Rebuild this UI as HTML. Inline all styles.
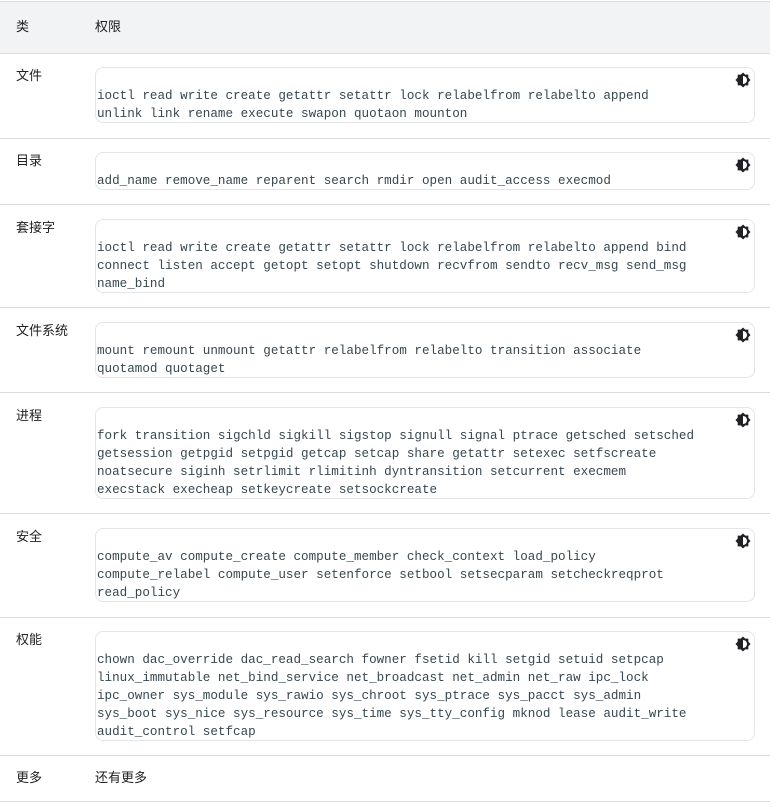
<!DOCTYPE html>
<html><head><meta charset="utf-8"><style>
body{margin:0;background:#fff;width:777px;height:807px;position:relative;overflow:hidden;font-family:"Liberation Sans","Noto Sans CJK SC",sans-serif;font-size:13px;color:#202124}
.hd{position:absolute;left:0;top:1px;width:770px;height:51px;background:#f1f3f4;border-top:1px solid #dadce0;border-bottom:1px solid #dadce0}
.line{position:absolute;left:0;width:770px;height:1px;background:#dadce0}
.lab{position:absolute;left:16px;line-height:18px}
.box{position:absolute;left:95px;width:660px;border:1px solid #e3e5e8;border-radius:8px;box-sizing:border-box;padding:19px 0 0 1px;font-family:"Liberation Mono",monospace;font-size:12.6px;line-height:18px;color:#37474f;white-space:pre}
.box svg{position:absolute;right:3px;top:4px}
</style></head><body>
<div class="hd"></div>
<div class="lab" style="top:18px">类</div>
<div class="lab" style="top:18px;left:95px">权限</div>

<div class="lab" style="top:67px">文件</div>
<div class="box" style="top:67px;height:56px">ioctl read write create getattr setattr lock relabelfrom relabelto append
unlink link rename execute swapon quotaon mounton<svg width="16" height="16" viewBox="0 0 24 24"><path fill="#202124" fill-rule="evenodd" d="M20 15.31L23.31 12 20 8.69V4h-4.69L12 .69 8.69 4H4v4.69L.69 12 4 15.31V20h4.69L12 23.31 15.31 20H20v-4.69zM12 18V6c3.31 0 6 2.69 6 6s-2.69 6-6 6z"/></svg></div>
<div class="line" style="top:138px"></div>

<div class="lab" style="top:152px">目录</div>
<div class="box" style="top:152px;height:38px">add_name remove_name reparent search rmdir open audit_access execmod<svg width="16" height="16" viewBox="0 0 24 24"><path fill="#202124" fill-rule="evenodd" d="M20 15.31L23.31 12 20 8.69V4h-4.69L12 .69 8.69 4H4v4.69L.69 12 4 15.31V20h4.69L12 23.31 15.31 20H20v-4.69zM12 18V6c3.31 0 6 2.69 6 6s-2.69 6-6 6z"/></svg></div>
<div class="line" style="top:204px"></div>

<div class="lab" style="top:219px">套接字</div>
<div class="box" style="top:219px;height:74px">ioctl read write create getattr setattr lock relabelfrom relabelto append bind
connect listen accept getopt setopt shutdown recvfrom sendto recv_msg send_msg
name_bind<svg width="16" height="16" viewBox="0 0 24 24"><path fill="#202124" fill-rule="evenodd" d="M20 15.31L23.31 12 20 8.69V4h-4.69L12 .69 8.69 4H4v4.69L.69 12 4 15.31V20h4.69L12 23.31 15.31 20H20v-4.69zM12 18V6c3.31 0 6 2.69 6 6s-2.69 6-6 6z"/></svg></div>
<div class="line" style="top:307px"></div>

<div class="lab" style="top:322px">文件系统</div>
<div class="box" style="top:322px;height:56px">mount remount unmount getattr relabelfrom relabelto transition associate
quotamod quotaget<svg width="16" height="16" viewBox="0 0 24 24"><path fill="#202124" fill-rule="evenodd" d="M20 15.31L23.31 12 20 8.69V4h-4.69L12 .69 8.69 4H4v4.69L.69 12 4 15.31V20h4.69L12 23.31 15.31 20H20v-4.69zM12 18V6c3.31 0 6 2.69 6 6s-2.69 6-6 6z"/></svg></div>
<div class="line" style="top:392px"></div>

<div class="lab" style="top:407px">进程</div>
<div class="box" style="top:407px;height:92px">fork transition sigchld sigkill sigstop signull signal ptrace getsched setsched
getsession getpgid setpgid getcap setcap share getattr setexec setfscreate
noatsecure siginh setrlimit rlimitinh dyntransition setcurrent execmem
execstack execheap setkeycreate setsockcreate<svg width="16" height="16" viewBox="0 0 24 24"><path fill="#202124" fill-rule="evenodd" d="M20 15.31L23.31 12 20 8.69V4h-4.69L12 .69 8.69 4H4v4.69L.69 12 4 15.31V20h4.69L12 23.31 15.31 20H20v-4.69zM12 18V6c3.31 0 6 2.69 6 6s-2.69 6-6 6z"/></svg></div>
<div class="line" style="top:513px"></div>

<div class="lab" style="top:528px">安全</div>
<div class="box" style="top:528px;height:74px">compute_av compute_create compute_member check_context load_policy
compute_relabel compute_user setenforce setbool setsecparam setcheckreqprot
read_policy<svg width="16" height="16" viewBox="0 0 24 24"><path fill="#202124" fill-rule="evenodd" d="M20 15.31L23.31 12 20 8.69V4h-4.69L12 .69 8.69 4H4v4.69L.69 12 4 15.31V20h4.69L12 23.31 15.31 20H20v-4.69zM12 18V6c3.31 0 6 2.69 6 6s-2.69 6-6 6z"/></svg></div>
<div class="line" style="top:617px"></div>

<div class="lab" style="top:631px">权能</div>
<div class="box" style="top:631px;height:110px">chown dac_override dac_read_search fowner fsetid kill setgid setuid setpcap
linux_immutable net_bind_service net_broadcast net_admin net_raw ipc_lock
ipc_owner sys_module sys_rawio sys_chroot sys_ptrace sys_pacct sys_admin
sys_boot sys_nice sys_resource sys_time sys_tty_config mknod lease audit_write
audit_control setfcap<svg width="16" height="16" viewBox="0 0 24 24"><path fill="#202124" fill-rule="evenodd" d="M20 15.31L23.31 12 20 8.69V4h-4.69L12 .69 8.69 4H4v4.69L.69 12 4 15.31V20h4.69L12 23.31 15.31 20H20v-4.69zM12 18V6c3.31 0 6 2.69 6 6s-2.69 6-6 6z"/></svg></div>
<div class="line" style="top:755px"></div>

<div class="lab" style="top:769px">更多</div>
<div class="lab" style="top:769px;left:95px">还有更多</div>
<div class="line" style="top:801px"></div>
</body></html>
